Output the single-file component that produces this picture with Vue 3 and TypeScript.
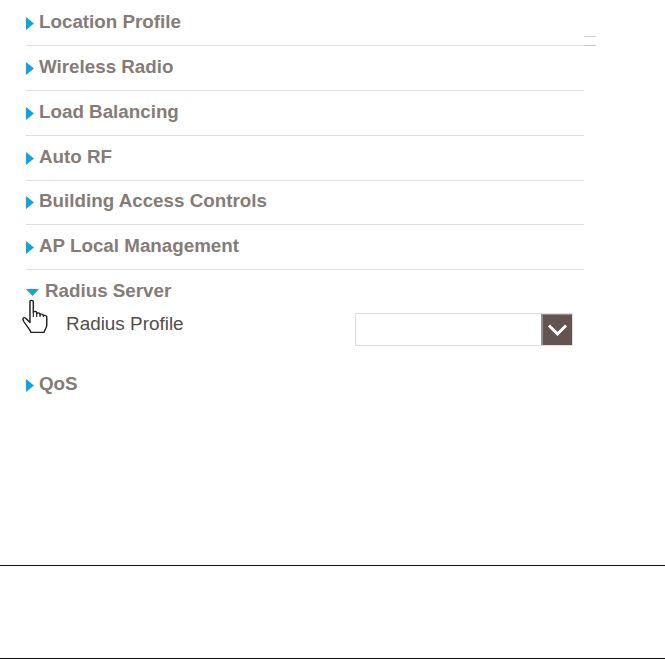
<script setup lang="ts">
const before: string[] = ['Location Profile', 'Wireless Radio', 'Load Balancing', 'Auto RF', 'Building Access Controls', 'AP Local Management']
</script>

<template>
  <div class="page">
    <div class="panel">
      <span class="mark mark-top"></span>
      <span class="mark mark-bottom"></span>
      <div v-for="label in before" :key="label" class="row">
        <svg class="arrow" width="8" height="13" viewBox="0 0 8 13"><path d="M0 0L8 6.5L0 13Z" fill="#12a5dd" /></svg>
        <span class="title">{{ label }}</span>
      </div>
      <div class="open-head">
        <svg class="arrow-down" width="13" height="7" viewBox="0 0 13 7"><path d="M0 0H13L6.500 7Z" fill="#12a5dd" /></svg>
        <span class="title">Radius Server</span>
      </div>
      <div class="field">
        <span class="field-label">Radius Profile</span>
        <div class="select">
          <div class="select-btn">
            <svg width="21" height="14" viewBox="0 0 21 14"><path d="M2 2.500L10.500 11L19 2.500" fill="none" stroke="#fff" stroke-width="3" /></svg>
          </div>
        </div>
        <svg class="hand" width="28" height="34" viewBox="0 0 25 34" preserveAspectRatio="none">
          <path d="M8 2.500C8 1 11 1 11 2.500V13.500C11 12 14 12 14 13.500V15C14 13.500 17 13.500 17 15V16C17 14.500 20 15 20 16.500V17C20 16 23 16 23 18V26C23 29 21 31 20.500 33.500H9C8 30 5 27 2.500 22.500C1 19.500 2 18 4 19L8 23.500Z" fill="#fff" stroke="#222" stroke-width="1.300" stroke-linejoin="round" />
          <path d="M11 13.500V18M14 14V18M17 15V18M20 16.500V18" stroke="#222" fill="none" />
        </svg>
      </div>
      <div class="row last">
        <svg class="arrow" width="8" height="13" viewBox="0 0 8 13"><path d="M0 0L8 6.500L0 13Z" fill="#12a5dd" /></svg>
        <span class="title">QoS</span>
      </div>
    </div>
    <div class="footer"></div>
  </div>
</template>

<style>
html, body { background: #fff; }
</style>

<style scoped>
.page {
  width: 665px;
  height: 659px;
  overflow: hidden;
  font-family: "Liberation Sans", Arial, sans-serif;
  background: #fff;
}
.panel {
  position: relative;
  box-sizing: border-box;
  width: 558px;
  height: 565px;
  margin-left: 26px;
  padding-top: 1.400px;
}
.mark {
  position: absolute;
  left: 558px;
  width: 12px;
  height: 1px;
}
.mark-top { top: 36px; background: #d8d0d0; }
.mark-bottom { top: 45px; background: #c8c6c2; }
.row {
  box-sizing: border-box;
  height: 44.8px;
  padding-top: 10.800px;
  display: flex;
  align-items: flex-start;
  gap: 5px;
  border-bottom: 1px solid #dedede;
}
.row.last { border-bottom: 0; height: 30px; padding-top: 0; }
.arrow { margin-top: 5px; flex: none; }
.title {
  font-size: 18.800px;
  line-height: 20px;
  font-weight: 700;
  color: #857b77;
  white-space: nowrap;
}
.open-head {
  display: flex;
  align-items: center;
  gap: 6px;
  height: 24px;
  margin-top: 9.100px;
}
.arrow-down { margin-top: 2px; }
.field {
  position: relative;
  display: flex;
  height: 61px;
  margin-top: 10px;
  padding-left: 40px;
}
.field-label {
  font-size: 18.900px;
  line-height: 20px;
  margin-top: 1px;
  color: #574c48;
}
.select {
  position: absolute;
  left: 329px;
  top: 0;
  box-sizing: border-box;
  width: 218px;
  height: 33px;
  border: 1px solid #dedede;
  display: flex;
  justify-content: flex-end;
}
.select-btn {
  box-sizing: border-box;
  width: 31px;
  height: 31px;
  background: #645450;
  border-left: 2px solid #8f8f8f;
  border-top: 1px solid #8f8f8f;
  display: flex;
  align-items: center;
  justify-content: center;
}
.hand {
  position: absolute;
  left: -5px;
  top: -14px;
}
.footer {
  box-sizing: border-box;
  height: 94px;
  border-top: 1px solid #111;
  border-bottom: 1px solid #111;
}
</style>
